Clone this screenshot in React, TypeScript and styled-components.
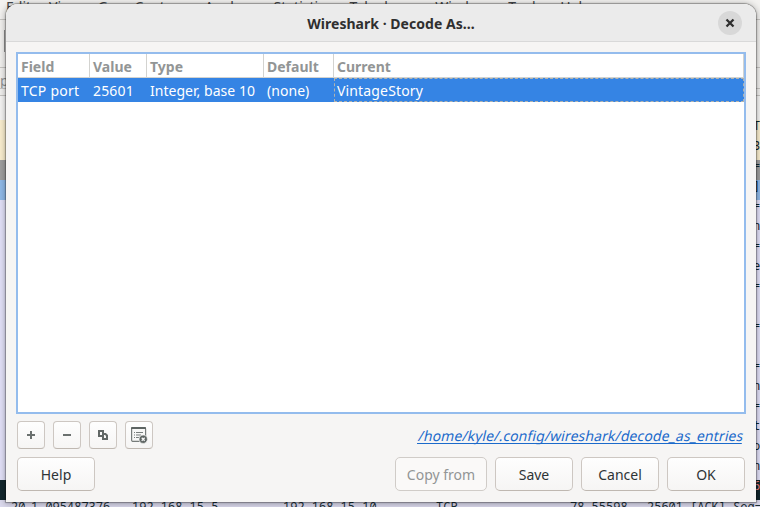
import React from 'react';
import styled, { createGlobalStyle } from 'styled-components';

const GlobalStyle = createGlobalStyle`
  * { box-sizing: border-box; }
  html, body { margin: 0; padding: 0; overflow: hidden; }
  body { font-family: "Noto Sans", "Open Sans", sans-serif; font-size: 14px; color: #2e3436; }
`;

const Desktop = styled.div`
  position: relative;
  width: 760px;
  height: 507px;
  overflow: hidden;
  background: #f3f2f0;
`;

const MenuBar = styled.div`
  display: flex;
  height: 20px;
  padding-left: 6px;
  gap: 18px;
  line-height: 20px;
  margin-top: -3px;
  color: #45484a;
  white-space: nowrap;
`;

const ToolStrip = styled.div<{ $height: number; $bg?: string; $plain?: boolean }>`
  height: ${p => p.$height}px;
  border-top: ${p => (p.$plain ? '0' : '1px solid #c8c6c3')};
  background: ${p => p.$bg ?? '#f3f2f0'};
  color: #929595;
  line-height: 26px;
  overflow: hidden;
`;

const ToolHandle = styled.div`
  width: 1px;
  height: 22px;
  margin: 10px 0 0 4px;
  background: #8d8d8d;
`;

const PacketRow = styled.div<{ $bg: string; $fg?: string }>`
  display: flex;
  justify-content: flex-end;
  height: 20px;
  line-height: 12px;
  background: ${p => p.$bg};
  color: ${p => p.$fg ?? '#12272e'};
  font-family: "Noto Sans Mono", "Liberation Mono", monospace;
  font-size: 12px;
`;

const PacketTail = styled.span`
  width: 7px;
`;

const PacketDetail = styled.div`
  display: grid;
  grid-template-columns: 20px 101px 151px 153px 134px 77px 43px 43px 40px;
  height: 20px;
  padding-left: 11px;
  background: #dcdaee;
  color: #1b3038;
  font: 12px/14px "Noto Sans Mono", "Liberation Mono", monospace;
  white-space: pre;
`;

const Dialog = styled.div`
  position: absolute;
  left: 6px;
  top: 4px;
  width: 750px;
  height: 498px;
  display: flex;
  flex-direction: column;
  border-radius: 12px 12px 0 0;
  background: #f6f5f4;
  overflow: hidden;
`;

const DialogShadow = styled(Dialog)`
  background: transparent;
  box-shadow: 0 0 1px 1px rgba(0, 0, 0, 0.3), 0 1px 7px 1px rgba(0, 0, 0, 0.3);
`;

const TitleBar = styled.header`
  display: grid;
  grid-template-columns: 42px 1fr 42px;
  align-items: center;
  height: 38px;
  flex: none;
  padding-right: 3px;
  background: #ebebeb;
  border-bottom: 1px solid #d9d9d9;
`;

const Title = styled.h1`
  grid-column: 2;
  margin: 0;
  padding: 3px 0 0 23px;
  text-align: center;
  font-size: 14px;
  line-height: 20px;
  font-weight: 700;
  color: #2f2f2f;
`;

const Label = styled.span<{ $spacing?: number }>`
  letter-spacing: ${p => p.$spacing ?? 0}px;
  white-space: pre;
`;

const CloseButton = styled.button`
  display: grid;
  place-items: center;
  width: 24px;
  height: 24px;
  margin-left: 7px;
  padding: 0;
  border: 0;
  border-radius: 50%;
  background: #d8d8d8;
`;

const TableFrame = styled.div`
  height: 362px;
  flex: none;
  margin: 10px 10px 0;
  border: 2px solid #94bced;
  background: #fff;
`;

const TableRow = styled.div<{ $selected?: boolean }>`
  display: grid;
  grid-template-columns: 72px 57px 117px 70px 1fr;
  grid-template-rows: 24px;
  height: 24px;
  background: ${p => (p.$selected ? '#3584e4' : '#fff')};
  color: #fff;
`;

const HeaderCell = styled.div`
  padding: 2px 0 0 3px;
  border-right: 1px solid #d3d3d0;
  border-bottom: 1px solid #d3d3d0;
  line-height: 21px;
  font-weight: 700;
  color: #929595;
`;

const Cell = styled.div<{ $focused?: boolean }>`
  padding: ${p => (p.$focused ? '1px 0 0 2px' : '2px 0 0 3px')};
  line-height: ${p => (p.$focused ? 21 : 22)}px;
  border: ${p => (p.$focused ? '1px dashed #b2b3ae' : '0')};
  white-space: nowrap;
`;

const ToolRow = styled.div`
  display: flex;
  align-items: center;
  gap: 8px;
  height: 28px;
  margin: 7px 12px 0 11px;
`;

const IconButton = styled.button`
  display: grid;
  place-items: center;
  width: 28px;
  height: 28px;
  padding: 0;
  border: 1px solid #cdc7c2;
  border-bottom-color: #bfb8b1;
  border-radius: 4px;
  background: linear-gradient(#fefefe, #f6f5f4);
`;

const ProfileLink = styled.a`
  margin-left: auto;
  color: #1b6acb;
  line-height: 20px;
  padding-top: 2px;
  text-decoration: underline;
  text-decoration-skip-ink: none;
  text-underline-offset: 2px;
  transform: skewX(-13deg);
`;

const ButtonRow = styled.footer`
  display: flex;
  gap: 8px;
  margin: 8px 11px 0;
`;

const Button = styled.button<{ $width?: number; $first?: boolean }>`
  width: ${p => p.$width ?? 78}px;
  height: 34px;
  margin-right: ${p => (p.$first ? 'auto' : '0')};
  padding: 1px 0 0;
  border: 1px solid #cdc7c2;
  border-bottom-color: #bfb8b1;
  border-radius: 5px;
  background: linear-gradient(#fefefe, #f6f5f4);
  color: #2e3436;
  font: inherit;
  &:disabled {
    border-color: #d0ccc8;
    background: #faf9f8;
    color: #929595;
  }
`;

const CloseIcon = () => (
  <svg width="10" height="10" viewBox="0 0 10 10">
    <path d="M1.5 1.5 8.5 8.5M8.5 1.5 1.5 8.5" stroke="#2e2e2e" strokeWidth="2.3" />
  </svg>
);

const PlusIcon = () => (
  <svg width="16" height="16" viewBox="0 0 16 16">
    <path d="M4 8h8M8 4v8" stroke="#6b716f" strokeWidth="2" />
  </svg>
);

const MinusIcon = () => (
  <svg width="16" height="16" viewBox="0 0 16 16">
    <path d="M4 8h8" stroke="#6b716f" strokeWidth="2" />
  </svg>
);

const CopyIcon = () => (
  <svg width="16" height="16" viewBox="0 0 16 16">
    <path d="M4 4h4v5H4z" fill="none" stroke="#626866" strokeWidth="2" />
    <path d="M8 7h2.5L12 8.5V12H8z" fill="#f8f8f7" stroke="#626866" strokeWidth="2" />
  </svg>
);

const ClearIcon = () => (
  <svg width="18" height="18" viewBox="0 0 18 18">
    <rect x="1.6" y="1.6" width="14" height="13.8" rx="1.5" fill="#f7f7f6" stroke="#777c7a" strokeWidth="1.2" />
    <path d="M1 3V2q0-1 1-1h13q1 0 1 1v1z" fill="#5d6462" />
    <path d="M4 6.5h1M6 6.5h7M4 9h1M6 9h5M4 11.5h1M6 11.5h3" stroke="#777d7b" strokeWidth="1.1" />
    <circle cx="13.2" cy="13.2" r="4.2" fill="#5e6563" stroke="#f8f8f7" strokeWidth=".7" />
    <path d="m11.7 11.7 3 3m0-3-3 3" stroke="#f5f5f4" strokeWidth="1.3" />
  </svg>
);

const menus = ['Edit', 'View', 'Go', 'Capture', 'Analyze', 'Statistics', 'Telephony', 'Wireless', 'Tools', 'Help'];

const packets = [
  ['#fcf0d0', 'T'], ['#fcf0d0', '3'], ['#a0a0a0', '='], ['#91bbea', ']'],
  ['#e4e2fa', '='], ['#e4e2fa', 'n'], ['#e4e2fa', '='], ['#e4e2fa', 'e'],
  ['#e4e2fa', '='], ['#e4e2fa', ''], ['#e4e2fa', '='], ['#e4e2fa', ''],
  ['#e4e2fa', '='], ['#e4e2fa', 'n'], ['#e4e2fa', '='], ['#e4e2fa', 't'],
  ['#e4e2fa', 'o'], ['#e4e2fa', 'n'], ['#12272e', '6', '#f78787'],
];

const detail = ['20', '1.095487376', '192.168.15.5', '192.168.15.10', 'TCP', '78 55598 →', '25601', '[ACK]', 'Seq='];

const headers = ['Field', 'Value', 'Type', 'Default', 'Current'];
const values: [string, number][] = [['TCP port', 0.25], ['25601', 0.15], ['Integer, base 10', 0.03], ['(none)', 0.05], ['VintageStory', 0.15]];

export default function App() {
  return (
    <>
      <GlobalStyle />
      <Desktop>
        <MenuBar>{menus.map(m => <span key={m}>{m}</span>)}</MenuBar>
        <ToolStrip $height={2} $plain />
        <ToolStrip $height={48}><ToolHandle /></ToolStrip>
        <ToolStrip $height={21}>p</ToolStrip>
        <ToolStrip $height={7} />
        <ToolStrip $height={25} $bg="#f7f6f5" />
        {packets.map(([bg, text, fg], i) => (
          <PacketRow key={i} $bg={bg} $fg={fg}><PacketTail>{text}</PacketTail></PacketRow>
        ))}
        <PacketDetail>{detail.map(t => <span key={t}>{t}</span>)}</PacketDetail>
        <DialogShadow />
        <Dialog>
          <TitleBar>
            <Title><Label $spacing={0.03}>Wireshark · Decode As…</Label></Title>
            <CloseButton aria-label="Close"><CloseIcon /></CloseButton>
          </TitleBar>
          <TableFrame>
            <TableRow>
              {headers.map(t => <HeaderCell key={t}>{t}</HeaderCell>)}
            </TableRow>
            <TableRow $selected>
              {values.map(([t, s], i) => <Cell key={t} $focused={i === 4}><Label $spacing={s}>{t}</Label></Cell>)}
            </TableRow>
          </TableFrame>
          <ToolRow>
            <IconButton aria-label="Add"><PlusIcon /></IconButton>
            <IconButton aria-label="Remove"><MinusIcon /></IconButton>
            <IconButton aria-label="Copy"><CopyIcon /></IconButton>
            <IconButton aria-label="Clear"><ClearIcon /></IconButton>
            <ProfileLink><Label $spacing={0.1}>/home/kyle/.config/wireshark/decode_as_entries</Label></ProfileLink>
          </ToolRow>
          <ButtonRow>
            <Button $first><Label>Help</Label></Button>
            <Button $width={92} disabled><Label>Copy from</Label></Button>
            <Button><Label>Save</Label></Button>
            <Button><Label>Cancel</Label></Button>
            <Button><Label>OK</Label></Button>
          </ButtonRow>
        </Dialog>
      </Desktop>
    </>
  );
}
